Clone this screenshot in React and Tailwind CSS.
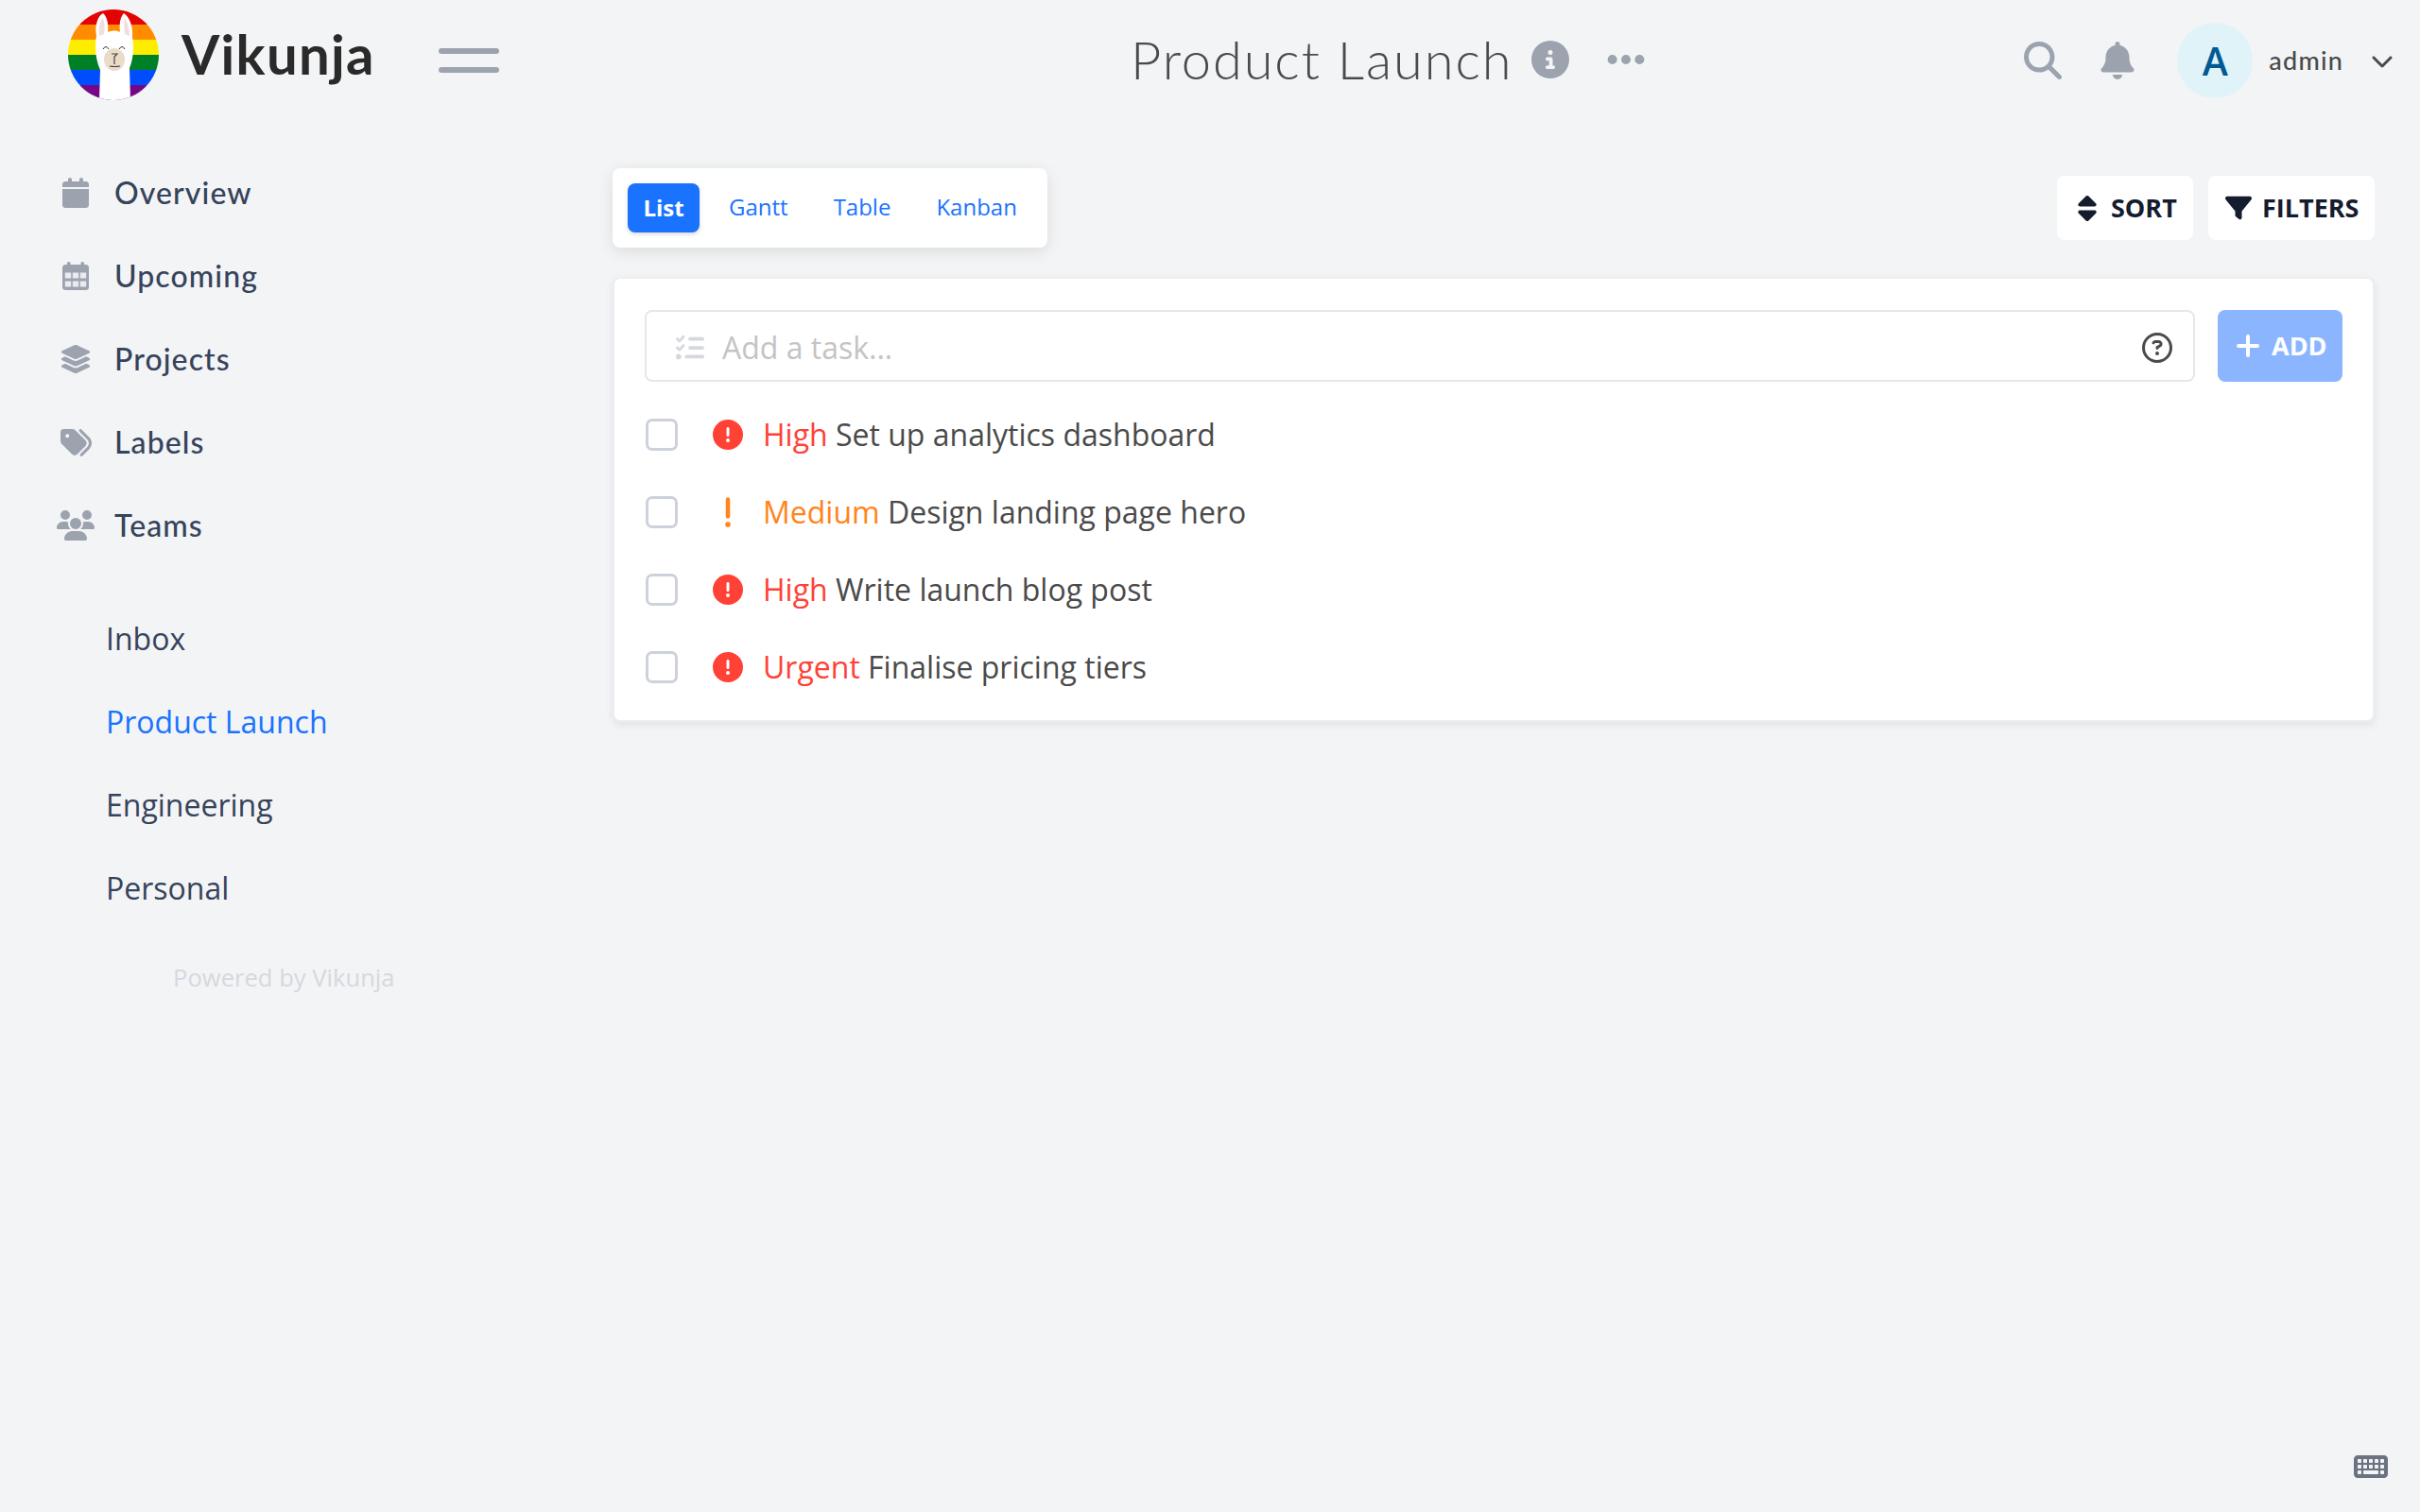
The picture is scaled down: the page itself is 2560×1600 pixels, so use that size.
import React from "react";
import {
  FaCalendar, FaLayerGroup, FaTags, FaUsers, FaCircleInfo, FaEllipsis,
  FaMagnifyingGlass, FaBell, FaChevronDown, FaSort, FaFilter, FaListCheck, FaRegCircleQuestion,
  FaCircleExclamation, FaExclamation, FaKeyboard,
} from "react-icons/fa6";

function Logo() {
  return (
    <svg viewBox="0 0 96 96" className="w-[96px] h-[96px] shrink-0">
      <defs>
        <clipPath id="logoClip"><circle cx="48" cy="48" r="48" /></clipPath>
      </defs>
      <g clipPath="url(#logoClip)">
        <rect x="0" y="0" width="96" height="16" fill="#e40303" />
        <rect x="0" y="16" width="96" height="16" fill="#ff8c00" />
        <rect x="0" y="32" width="96" height="16" fill="#ffed00" />
        <rect x="0" y="48" width="96" height="16" fill="#008026" />
        <rect x="0" y="64" width="96" height="16" fill="#004dff" />
        <rect x="0" y="80" width="96" height="16" fill="#750787" />
        <path d="M30 28C28 18 31 7 37 4C42 8 43 18 42 24C46 22 52 22 55 24C54 16 55 8 59 4C65 8 69 18 68 29C70 40 69 52 65 62L66 96H33L34 64C29 52 28 40 30 28Z" fill="#ffffff" />
        <path d="M33 28C32 20 33 13 37 9C39 14 39 21 38 26Z" fill="#f3dede" />
        <path d="M60 26C59 20 59 13 60 9C63 14 65 20 65 28Z" fill="#f3dede" />
        <ellipse cx="49" cy="53" rx="11" ry="12" fill="#ebdcc9" />
        <path d="M37 42Q40 37 43 42M54 42Q57 37 60 42" stroke="#333" strokeWidth="1" fill="none" />
        <path d="M46 47H52L49 50V58M44 60Q49 61 55 60" stroke="#444" strokeWidth="1.2" fill="none" />
      </g>
    </svg>
  );
}

function UpcomingIcon({ className }) {
  return (
    <svg viewBox="0 0 28 30" className={className} fill="#9ca3af">
      <rect x="5" y="0" width="3.5" height="6" rx="1.5" />
      <rect x="19.5" y="0" width="3.5" height="6" rx="1.5" />
      <rect x="0" y="3" width="28" height="27" rx="3.5" />
      <g fill="#e9ebef">
        <rect x="2.8" y="11.5" width="6.4" height="6" />
        <rect x="10.8" y="11.5" width="6.4" height="6" />
        <rect x="18.8" y="11.5" width="6.4" height="6" />
        <rect x="2.8" y="20.5" width="6.4" height="6" />
        <rect x="10.8" y="20.5" width="6.4" height="6" />
        <rect x="18.8" y="20.5" width="6.4" height="6" />
      </g>
    </svg>
  );
}

const navItems = [
  { label: "Overview", icon: <FaCalendar className="w-[28px] h-[32px] text-[#9ca3af]" /> },
  { label: "Upcoming", icon: <UpcomingIcon className="w-[28px] h-[30px]" /> },
  { label: "Projects", icon: <FaLayerGroup className="w-[34px] h-[32px] text-[#9ca3af]" /> },
  { label: "Labels", icon: <FaTags className="w-[33px] h-[33px] text-[#9ca3af]" /> },
  { label: "Teams", icon: <FaUsers className="w-[40px] h-[32px] text-[#9ca3af]" /> },
];

const projects = [
  { label: "Inbox", active: false },
  { label: "Product Launch", active: true },
  { label: "Engineering", active: false },
  { label: "Personal", active: false },
];

const tasks = [
  { prio: "High", color: "text-[#ff4136]", name: "Set up analytics dashboard", medium: false },
  { prio: "Medium", color: "text-[#ff851b]", name: "Design landing page hero", medium: true },
  { prio: "High", color: "text-[#ff4136]", name: "Write launch blog post", medium: false },
  { prio: "Urgent", color: "text-[#ff4136]", name: "Finalise pricing tiers", medium: false },
];

export default function App() {
  return (
    <div className="w-[2560px] h-[1600px] overflow-hidden bg-[#f3f4f6] font-['Open_Sans',sans-serif] relative">
      {/* Header */}
      <header className="h-[128px] flex items-center pl-[72px] pr-[28px]">
        <div className="self-start mt-[10px]"><Logo /></div>
        <span className="ml-[24px] -mt-[14px] w-[272px] font-['Lato',sans-serif] font-bold text-[58px] leading-none tracking-[1.3px] text-[#2a2a2a]">Vikunja</span>
        <button className="flex flex-col gap-[14px] w-[64px]">
          <span className="block h-[6px] rounded-full bg-[#9ca3af]" />
          <span className="block h-[6px] rounded-full bg-[#9ca3af]" />
        </button>
        <div className="ml-[668px] -mt-[2px] flex items-center">
          <h1 className="font-['Lato',sans-serif] font-light text-[56px] leading-none tracking-[1.9px] text-[#4a4a4a] w-[424px]">Product Launch</h1>
          <FaCircleInfo className="w-[40px] h-[40px] text-[#9ca3af]" />
          <FaEllipsis className="ml-[37px] w-[46px] h-[46px] text-[#9ca3af]" />
        </div>
        <div className="ml-auto flex items-center">
          <FaMagnifyingGlass className="w-[40px] h-[40px] text-[#9ca3af]" />
          <FaBell className="ml-[41px] w-[36px] h-[40px] text-[#9ca3af]" />
          <div className="ml-[45px] w-[80px] h-[80px] rounded-full bg-[#e0f3f8] flex items-center justify-center text-[41px] font-semibold text-[#005a93] leading-none">A</div>
          <span className="ml-[17px] font-['Lato',sans-serif] font-medium text-[27px] tracking-[1.2px] text-[#4a4a4a]">admin</span>
          <FaChevronDown className="ml-[29px] w-[24px] h-[24px] text-[#4a4a4a]" />
        </div>
      </header>

      {/* Body */}
      <div className="flex">
        <aside className="w-[648px] shrink-0 pt-[32px]">
          <nav>
            {navItems.map((item) => (
              <div key={item.label} className="h-[88px] flex items-center">
                <div className="ml-[60px] w-[40px] flex justify-center">{item.icon}</div>
                <span className="ml-[21px] font-['Lato',sans-serif] font-medium text-[32px] tracking-[1.1px] text-[#36435a]">{item.label}</span>
              </div>
            ))}
          </nav>
          <div className="mt-[32px]">
            {projects.map((p) => (
              <div key={p.label} className={`h-[88px] flex items-center pl-[112px] text-[32px] ${p.active ? "text-[#1973ff]" : "text-[#36435a]"}`}>
                {p.label}
              </div>
            ))}
          </div>
          <div className="mt-[31px] pl-[183px] text-[25.6px] leading-[40px] text-[#d6d8de]">Powered by Vikunja</div>
        </aside>

        <main className="w-[1864px] shrink-0">
          <div className="pt-[50px] flex items-start justify-between">
            <div className="h-[84px] w-[460px] bg-white rounded-[8px] shadow-[0_4px_16px_rgba(0,0,0,0.1)] flex items-center pl-[16px] text-[24px] text-[#1973ff]">
              <span className="w-[76px] h-[52px] rounded-[8px] bg-[#1973ff] text-white font-bold flex items-center justify-center shadow-[0_2px_4px_rgba(0,0,0,0.15)]">List</span>
              <span className="ml-[31px] -mt-[2px]">Gantt</span>
              <span className="ml-[48px] -mt-[2px]">Table</span>
              <span className="ml-[48px] -mt-[2px]">Kanban</span>
            </div>
            <div className="mt-[8px] flex gap-[16px]">
              <button className="w-[144px] h-[68px] rounded-[8px] bg-white flex items-center pl-[20px] text-[27px] font-bold text-[#141c2e]">
                <FaSort className="w-[24px] h-[31px]" />
                <span className="ml-[13px]">SORT</span>
              </button>
              <button className="w-[176px] h-[68px] rounded-[8px] bg-white flex items-center pl-[18px] text-[27px] font-bold text-[#141c2e]">
                <FaFilter className="w-[28px] h-[28px]" />
                <span className="ml-[11px]">FILTERS</span>
              </button>
            </div>
          </div>

          <section className="mt-[31px] bg-white rounded-[8px] border-2 border-[#eceef1] shadow-[0_3px_8px_rgba(0,0,0,0.08)] px-[32px] pt-[33px] pb-[15px]">
            <div className="flex gap-[24px]">
              <div className="flex-1 h-[76px] border-2 border-[#e6e7eb] rounded-[8px] flex items-center pl-[29px] pr-[22px] pt-[3px]">
                <FaListCheck className="w-[34px] h-[30px] text-[#d5d8de]" />
                <span className="ml-[17px] text-[32px] text-[#c4c4c4]">Add a task...</span>
                <FaRegCircleQuestion className="ml-auto w-[32px] h-[32px] text-[#4a4a4a]" />
              </div>
              <button className="w-[132px] h-[76px] rounded-[8px] bg-[#8bb6ff] flex items-center pl-[20px] text-white text-[27px] font-bold">
                <svg viewBox="0 0 24 24" className="w-[24px] h-[24px]" fill="none" stroke="currentColor" strokeWidth="4" strokeLinecap="round">
                  <path d="M12 2V22M2 12H22" />
                </svg>
                <span className="ml-[13px]">ADD</span>
              </button>
            </div>
            <ul className="mt-[15px] pl-[1px]">
              {tasks.map((t) => (
                <li key={t.name} className="h-[82px] flex items-center">
                  <span className="w-[34px] h-[34px] rounded-[7px] border-[3px] border-[#ccd1db] shrink-0" />
                  <span className="ml-[37px] w-[32px] flex justify-center shrink-0">
                    {t.medium
                      ? <FaExclamation className="w-[36px] h-[36px] shrink-0 text-[#ff851b]" />
                      : <FaCircleExclamation className="w-[32px] h-[32px] text-[#ff4136]" />}
                  </span>
                  <span className="ml-[21px] text-[32px] text-[#4a4a4a] leading-none">
                    <span className={t.color}>{t.prio}</span> {t.name}
                  </span>
                </li>
              ))}
            </ul>
          </section>
        </main>
      </div>

      <FaKeyboard className="absolute left-[2490px] top-[1534px] w-[36px] h-[36px] text-[#6b7280]" />
    </div>
  );
}
